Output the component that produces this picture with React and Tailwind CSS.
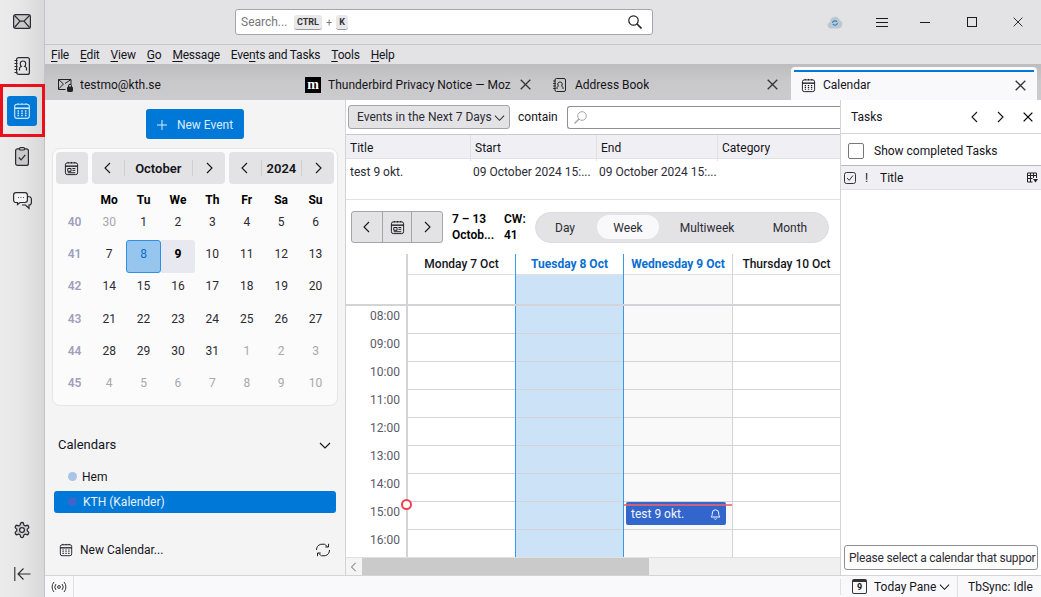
import React from "react";

const ink = "#15141a";

function CalIcon({ className = "w-4 h-4", small }) {
  return (
    <svg className={className} viewBox="0 0 16 16" fill="none" stroke="currentColor" strokeWidth="1">
      <rect x="1.5" y="2" width="13" height="12.5" rx="2" />
      <path d="M1.5 5.5h13" strokeWidth="1.4" />
      <path d="M4.5 1v1.5M8 1v1.5M11.5 1v1.5" />
      {small ? (
        <path d="M4 8h3.5v3H4zM9 8h3M9 10h3M4 12.5h8" strokeWidth="1" />
      ) : (
        <path d="M4 8h1.4M7.3 8h1.4M10.6 8H12M4 10h1.4M7.3 10h1.4M10.6 10H12M4 12h1.4M7.3 12h1.4M10.6 12H12" strokeWidth="1.2" />
      )}
    </svg>
  );
}

function Chevron({ dir = "left", className = "w-3 h-3" }) {
  const d = { left: "M8 1 3 6l5 5", right: "M4 1l5 5-5 5", down: "M1 4l5 5 5-5" }[dir];
  return (
    <svg className={className} viewBox="0 0 12 12" fill="none" stroke="currentColor" strokeWidth="1.1">
      <path d={d} />
    </svg>
  );
}

function CloseX({ className = "w-[11px] h-[11px]", w = "1.3" }) {
  return (
    <svg className={className} viewBox="0 0 11 11" fill="none" stroke="currentColor" strokeWidth={w}>
      <path d="M.7.7l9.6 9.6M10.3.7.7 10.3" />
    </svg>
  );
}

function RailButton({ children, active }) {
  return (
    <button className={active ? "w-[30px] h-[30px] rounded-[3px] bg-[#0078d7] text-[#cfe6fb] flex items-center justify-center" : "w-[30px] h-[30px] flex items-center justify-center text-[#2b2a30]"}>
      {children}
    </button>
  );
}

function Rail() {
  return (
    <aside className="w-[45px] shrink-0 flex flex-col items-center gap-[15px] pt-[6px] pb-[8px] bg-linear-to-r from-[#ececec] via-[#e6e6e6] to-[#d8d8d8] border-r border-[#c4c4c6]">
      <RailButton>
        <svg className="w-[18px] h-[15px]" viewBox="0 0 18 15" fill="#c9c9cb" stroke="currentColor" strokeWidth="1.2">
          <rect x=".6" y=".6" width="16.8" height="13.8" rx="2" />
          <path d="M1.5 1.5 7 7.2h4l5.5-5.7M1.5 13.5 7 7.2M16.5 13.5 11 7.2" fill="none" />
        </svg>
      </RailButton>
      <RailButton>
        <svg className="w-[16px] h-[18px]" viewBox="0 0 16 18" fill="none" stroke="currentColor" strokeWidth="1.2">
          <rect x="2.6" y=".6" width="12.8" height="16.8" rx="2" />
          <path d="M.5 3.5h3M.5 6.5h3M.5 9.5h3M.5 12.5h3M.5 15.5h3" strokeWidth="1" />
          <path d="M5.5 13.5v-2.3c0-1 1-1.4 1.8-1.7C6.5 8.8 6.3 7.6 6.3 6.5c0-1.4 1-2.5 2.7-2.5s2.7 1.1 2.7 2.5c0 1.1-.2 2.3-1 3 .8.3 1.8.7 1.8 1.7v2.3" />
        </svg>
      </RailButton>
      <RailButton active>
        <CalIcon className="w-[18px] h-[18px]" />
      </RailButton>
      <RailButton>
        <svg className="w-[14px] h-[19px]" viewBox="0 0 14 19" fill="#c9c9cb" stroke="currentColor" strokeWidth="1.2">
          <rect x=".6" y="1.8" width="12.8" height="16.6" rx="2" />
          <rect x="4.5" y=".6" width="5" height="2.4" rx="1" fill="#e6e6e6" />
          <path d="M3.8 10.5l2.3 2.4 4.2-5" fill="none" />
        </svg>
      </RailButton>
      <RailButton>
        <svg className="w-[19px] h-[18px]" viewBox="0 0 19 18" fill="none" stroke="currentColor" strokeWidth="1.2">
          <path d="M3 .7h9c1.4 0 2.4 1 2.4 2.4v5c0 1.4-1 2.4-2.4 2.4H7l-2.5 2v-2H3C1.6 10.5.6 9.5.6 8.1v-5C.6 1.7 1.6.7 3 .7z" fill="#f4f4f4" />
          <path d="M14.5 4.5c2.3 0 3.9.9 3.9 2.8v3.2c0 1.5-1 2.5-2.4 2.5v3.3l-3.5-3.3H9" />
          <path d="M5 5.5h.8M7.5 5.5h.8M10 5.5h.8" />
        </svg>
      </RailButton>
      <div className="mt-auto flex flex-col items-center gap-[14px]">
        <RailButton>
          <svg className="w-[18px] h-[18px]" viewBox="0 0 24 24" fill="#cfcfd1" stroke="currentColor" strokeWidth="1.7">
            <path d="M12.22 2h-.44a2 2 0 0 0-2 2v.18a2 2 0 0 1-1 1.73l-.43.25a2 2 0 0 1-2 0l-.15-.08a2 2 0 0 0-2.73.73l-.22.38a2 2 0 0 0 .73 2.73l.15.1a2 2 0 0 1 1 1.72v.51a2 2 0 0 1-1 1.74l-.15.09a2 2 0 0 0-.73 2.73l.22.38a2 2 0 0 0 2.73.73l.15-.08a2 2 0 0 1 2 0l.43.25a2 2 0 0 1 1 1.73V20a2 2 0 0 0 2 2h.44a2 2 0 0 0 2-2v-.18a2 2 0 0 1 1-1.73l.43-.25a2 2 0 0 1 2 0l.15.08a2 2 0 0 0 2.73-.73l.22-.39a2 2 0 0 0-.73-2.73l-.15-.08a2 2 0 0 1-1-1.74v-.5a2 2 0 0 1 1-1.74l.15-.09a2 2 0 0 0 .73-2.73l-.22-.38a2 2 0 0 0-2.73-.73l-.15.08a2 2 0 0 1-2 0l-.43-.25a2 2 0 0 1-1-1.73V4a2 2 0 0 0-2-2z" />
            <circle cx="12" cy="12" r="3.2" fill="#ececec" />
          </svg>
        </RailButton>
        <RailButton>
          <svg className="w-[17px] h-[14px]" viewBox="0 0 17 14" fill="none" stroke="currentColor" strokeWidth="1.1">
            <path d="M.8 0v14M16.5 7H4M9.5 1.5 4 7l5.5 5.5" />
          </svg>
        </RailButton>
      </div>
    </aside>
  );
}

function TitleBar() {
  return (
    <div className="h-[45px] shrink-0 flex items-center bg-[#e3e3e6] border-b border-[#c6c6c8] pl-[190px]">
      <div className="w-[418px] h-[26px] bg-white border border-[#a5a5a9] rounded-[3px] flex items-center pl-[5px] pr-[10px] text-[12px]">
        <span className="w-[53px] text-[#77777c]">Search...</span>
        <span className="w-[28px] h-[15px] rounded-[3px] bg-[#e8e8ea] border-b border-[#9a9a9e] text-[9px] leading-[14px] text-center font-bold text-[#333]">CTRL</span>
        <span className="w-[14px] text-center text-[#77777c] text-[10px]">+</span>
        <span className="w-[12px] h-[15px] rounded-[3px] bg-[#e8e8ea] border-b border-[#9a9a9e] text-[9px] leading-[14px] text-center font-bold text-[#333]">K</span>
        <svg className="ml-auto w-[14px] h-[14px]" viewBox="0 0 14 14" fill="none" stroke="#222" strokeWidth="1.2">
          <circle cx="5.5" cy="5.5" r="4.7" />
          <path d="M9 9l4.5 4.5" strokeWidth="1.6" />
        </svg>
      </div>
      <svg className="ml-[174px] w-[16px] h-[13px]" viewBox="0 0 16 13">
        <path d="M4 12.5c-2 0-3.5-1.4-3.5-3.2 0-1.5 1-2.7 2.4-3C3.2 3 5.3.8 8 .8c2.3 0 4.2 1.5 4.8 3.6 1.6.3 2.7 1.7 2.7 3.4 0 2.6-1.8 4.7-3.8 4.7z" fill="#bcc8d0" />
        <path d="M5.5 7a2.600 2.600 0 0 1 4.700-1M10.500 7a2.600 2.600 0 0 1-4.700 1" fill="none" stroke="#2f86c9" strokeWidth="1.2" />
      </svg>
      <svg className="ml-[33px] w-[12px] h-[9px]" viewBox="0 0 12 9" stroke="#1b1b1f" strokeWidth="1">
        <path d="M0 .5h12M0 4.5h12M0 8.5h12" />
      </svg>
      <div className="ml-[32px] w-[10px] h-[1px] bg-[#1b1b1f]" />
      <div className="ml-[37px] w-[10px] h-[10px] border border-[#1b1b1f]" />
      <CloseX className="ml-[36px] w-[10px] h-[10px] text-[#1b1b1f]" w="1" />
    </div>
  );
}

const menus = [
  ["", "F", "ile"],
  ["", "E", "dit"],
  ["", "V", "iew"],
  ["", "G", "o"],
  ["", "M", "essage"],
  ["Eve", "n", "ts and Tasks"],
  ["", "T", "ools"],
  ["", "H", "elp"],
];

function MenuBar() {
  return (
    <div className="h-[19px] shrink-0 flex items-center gap-[11px] pl-[6px] bg-[#e3e3e6] text-[12px] tracking-[-0.2px]" style={{ color: ink }}>
      {menus.map(([a, b, c]) => (
        <span key={b + c} className="whitespace-nowrap">
          {a}
          <span className="underline underline-offset-2">{b}</span>
          {c}
        </span>
      ))}
    </div>
  );
}

function Tab({ icon, label, width, close, closeRight, fade }) {
  return (
    <div className={`${width} h-full pt-[5px] flex items-center text-[12px] relative`}>
      {icon}
      <span className="ml-[7px] whitespace-nowrap overflow-hidden">{label}</span>
      {fade && <span className="absolute right-[27px] w-[20px] h-[15px] bg-linear-to-r from-transparent to-[#cacacc]" />}
      {close && <CloseX className={`absolute ${closeRight} w-[11px] h-[11px] text-[#333] shrink-0`} />}
    </div>
  );
}

function TabBar() {
  return (
    <div className="h-[36px] shrink-0 flex bg-linear-to-b from-[#bdbdbf] via-[#c9c9cb] to-[#cbcbcd] pl-[13px]" style={{ color: ink }}>
      <Tab
        width="w-[247px]"
        label="testmo@kth.se"
        icon={
          <svg className="w-[15px] h-[14px] shrink-0" viewBox="0 0 15 14" fill="none" stroke="#222" strokeWidth="1">
            <path d="M.5 1.5H13v5M.5 1.5v10h7M.5 1.5l5 4.500-5 5M13 1.500 7 5.500" />
            <rect x="9.5" y="9" width="5" height="4.5" rx=".8" fill="#222" />
            <path d="M10.5 9V7.800a1.500 1.500 0 0 1 3 0V9" />
          </svg>
        }
      />
      <Tab
        width="w-[248px]"
        label="Thunderbird Privacy Notice — Moz"
        close
        closeRight="right-[22px]"
        fade
        icon={
          <span className="w-[16px] h-[16px] shrink-0 bg-black text-white text-[14px] leading-[14px] font-bold flex items-center justify-center" style={{ fontFamily: "'Liberation Serif', serif" }}>m</span>
        }
      />
      <Tab
        width="w-[238px]"
        label="Address Book"
        close
        closeRight="right-[13px]"
        icon={
          <svg className="w-[13px] h-[14px] mr-[2px] shrink-0" viewBox="0 0 13 14" fill="none" stroke="#222" strokeWidth="1">
            <rect x="2" y=".5" width="10.5" height="13" rx="1.5" />
            <path d="M.2 3h2.500M.2 5.500h2.500M.2 8h2.500M.2 10.500h2.500" />
            <path d="M4 11V9.500c0-.8 1-1 1.500-1.300C5 7.700 4.800 6.800 4.800 6c0-1.200.8-2 2.200-2s2.200.8 2.200 2c0 .8-.2 1.700-.7 2.200.5.300 1.500.5 1.500 1.300V11" />
          </svg>
        }
      />
      <div className="w-[246px] h-[33px] self-end rounded-t-[4px] bg-[#f9f9fb] flex items-center pt-[3px] pl-[10px] pr-[11px] relative text-[12px]">
        <div className="absolute left-[3px] right-[3px] top-[3px] h-[2px] bg-[#0078d7]" />
        <CalIcon className="w-[15px] h-[15px]" />
        <span className="ml-[7px]">Calendar</span>
        <CloseX className="ml-auto w-[11px] h-[11px] text-[#333]" />
      </div>
    </div>
  );
}

function MonthNav({ label, width }) {
  return (
    <div className={`${width} h-[32px] rounded-[4px] bg-[#e3e3e6] flex items-center text-[13px] font-semibold`}>
      <span className="w-[32px] flex justify-center"><Chevron dir="left" /></span>
      <span className="flex-1 h-[16px] border-x border-[#cfcfd3] flex items-center justify-center leading-none">{label}</span>
      <span className="w-[32px] flex justify-center"><Chevron dir="right" /></span>
    </div>
  );
}

const weeks = [
  [40, [30, 1, 2, 3, 4, 5, 6]],
  [41, [7, 8, 9, 10, 11, 12, 13]],
  [42, [14, 15, 16, 17, 18, 19, 20]],
  [43, [21, 22, 23, 24, 25, 26, 27]],
  [44, [28, 29, 30, 31, 1, 2, 3]],
  [45, [4, 5, 6, 7, 8, 9, 10]],
];

function MiniMonth() {
  return (
    <div className="mx-[7px] mt-[9px] h-[258px] rounded-[8px] border border-[#e6e6e9] bg-[#fbfbfb] p-[3px]" style={{ color: ink }}>
      <div className="flex gap-[4px]">
        <div className="w-[32px] h-[32px] rounded-[4px] bg-[#e3e3e6] flex items-center justify-center">
          <CalIcon className="w-[15px] h-[15px]" small />
        </div>
        <MonthNav label="October" width="w-[134px]" />
        <MonthNav label="2024" width="w-[106px]" />
      </div>
      <div className="grid grid-cols-[35px_repeat(7,34.4px)] text-[12px] text-center mt-[9px] pl-[1px]">
        <span />
        {["Mo", "Tu", "We", "Th", "Fr", "Sa", "Su"].map((d) => (
          <span key={d} className="h-[13px] flex items-center justify-center font-bold text-black">{d}</span>
        ))}
        {weeks.map(([w, days], wi) => (
          <React.Fragment key={w}>
            <span className="h-[32.2px] flex items-center justify-center font-semibold text-[#a09fbd]">{w}</span>
            {days.map((d, i) => {
              const outside = (wi === 0 && d === 30) || wi === 5 || (wi === 4 && i > 3);
              let cls = "h-[32.2px] flex items-center justify-center text-[#2b2a33]";
              if (outside) cls = "h-[32.2px] flex items-center justify-center text-[#a8a8ae]";
              if (wi === 1 && d === 8) cls = "h-[33px] mt-[2px] -mb-[3px] flex items-center justify-center rounded-[3px] bg-[#96c6ee] border border-[#2e8fe6] text-[#0a6fd0] pb-[5px]";
              if (wi === 1 && d === 9) cls = "h-[33px] mt-[2px] -mb-[3px] flex items-center justify-center rounded-r-[3px] bg-[#e8e8f1] font-extrabold text-black pb-[5px]";
              return <span key={i} className={cls}>{d}</span>;
            })}
          </React.Fragment>
        ))}
      </div>
    </div>
  );
}

function LeftPane() {
  return (
    <div className="w-[301px] shrink-0 bg-[#f4f4f5] border-r border-[#d4d4d8] flex flex-col" style={{ color: ink }}>
      <button className="self-center mt-[9px] w-[98px] h-[30px] pt-[1px] rounded-[3px] bg-[#0078d7] text-[#dcecfa] text-[12px] flex items-center justify-center gap-[10px]">
        <svg className="w-[10px] h-[10px]" viewBox="0 0 10 10" stroke="currentColor" strokeWidth="1"><path d="M5 0v10M0 5h10" /></svg>
        New Event
      </button>
      <MiniMonth />
      <div className="mt-[29px] pl-[13px] pr-[14px] flex items-center justify-between text-[13px]">
        <span>Calendars</span>
        <Chevron dir="down" className="w-[12px] h-[12px]" />
      </div>
      <div className="mt-[11px] pl-[23px] h-[22px] flex items-center text-[12px]">
        <span className="w-[9px] h-[9px] rounded-full bg-[#a8c4e6]" />
        <span className="ml-[5px]">Hem</span>
      </div>
      <div className="mx-[9px] mt-[3px] pl-[14px] h-[22px] rounded-[3px] bg-[#0078d7] flex items-center text-[12px] text-[#e8f2fb]">
        <span className="w-[9px] h-[9px] rounded-full bg-[#3d66cc]" />
        <span className="ml-[6px]">KTH (Kalender)</span>
      </div>
      <div className="mt-auto mb-[16px] pl-[14px] pr-[14px] flex items-center text-[12px]">
        <CalIcon className="w-[14px] h-[14px]" />
        <span className="ml-[7px]">New Calendar...</span>
        <svg className="ml-auto w-[16px] h-[14px]" viewBox="0 0 16 14" fill="none" stroke="#222" strokeWidth="1">
          <path d="M1.5 7a6 6 0 0 1 11-3.300M14.500 7a6 6 0 0 1-11 3.300M13.500.8V4h-3.200M2.500 13.200V10h3.200" />
        </svg>
      </div>
    </div>
  );
}

function FilterBar() {
  return (
    <div className="h-[34px] shrink-0 bg-white flex items-center pl-[2px] text-[12px]">
      <div className="w-[162px] h-[24px] bg-[#e3e3e6] border border-[#a5a5a9] rounded-[3px] flex items-center pl-[8px] pr-[4px] text-[#2c2b33]">
        <span className="whitespace-nowrap">Events in the Next 7 Days</span>
        <Chevron dir="down" className="ml-auto w-[11px] h-[11px]" />
      </div>
      <span className="ml-[8px] w-[40px]">contain</span>
      <div className="ml-[9px] flex-1 h-[23px] bg-white border border-[#8f8f94] border-r-0 rounded-l-[3px] flex items-center pl-[6px]">
        <svg className="w-[13px] h-[13px]" viewBox="0 0 13 13" fill="none" stroke="#a5a5a9" strokeWidth="1">
          <circle cx="8" cy="5" r="4.3" />
          <path d="M5 8l-4.5 4.5" strokeWidth="1.4" />
        </svg>
      </div>
    </div>
  );
}

function EventList() {
  return (
    <div className="shrink-0 border-t border-[#c9c9cd]">
      <div className="h-[24px] grid grid-cols-[124px_126px_121px_1fr] bg-[#f0f0f4] border-b border-[#e0e0e6] text-[12px] leading-[26px]">
        {["Title", "Start", "End", "Category"].map((h, i) => (
          <span key={h} className={i === 0 ? "pl-[4px]" : "pl-[4px] border-l border-[#e0e0e6]"}>{h}</span>
        ))}
      </div>
      <div className="h-[41px] bg-white border-b border-[#e0e0e6] text-[12px] grid grid-cols-[124px_126px_121px_1fr] pt-[4px] text-[#2c2b33]">
        <span className="pl-[4px]">test 9 okt.</span>
        <span className="pl-[3px] whitespace-nowrap">09 October 2024 15:...</span>
        <span className="pl-[3px] whitespace-nowrap">09 October 2024 15:...</span>
        <span />
      </div>
    </div>
  );
}

function ViewToolbar() {
  return (
    <div className="h-[54px] shrink-0 bg-white flex items-center pl-[5px] text-[12px]">
      <div className="w-[92px] h-[32px] grid grid-cols-3 bg-[#e3e3e6] border border-[#a5a5a9] rounded-[3px]">
        <span className="flex items-center justify-center"><Chevron dir="left" /></span>
        <span className="flex items-center justify-center border-x border-[#a5a5a9]"><CalIcon className="w-[15px] h-[15px]" small /></span>
        <span className="flex items-center justify-center"><Chevron dir="right" /></span>
      </div>
      <div className="ml-[9px] w-[52px] font-semibold leading-[16px] text-black">
        <div>7 – 13</div>
        <div>Octob...</div>
      </div>
      <div className="w-[31px] font-semibold leading-[16px] text-black">
        <div>CW:</div>
        <div>41</div>
      </div>
      <div className="w-[294px] h-[31px] rounded-full bg-[#e3e3e6] border border-[#dcdcdf] flex items-center pl-[3px] text-[#2c2b33]">
        <span className="w-[52px] text-center pt-[1px]">Day</span>
        <span className="ml-[6px] w-[62px] h-[24px] pt-[1px] rounded-full bg-[#f9f9fb] flex items-center justify-center">Week</span>
        <span className="ml-[8px] w-[80px] text-center pt-[1px]">Multiweek</span>
        <span className="ml-[5px] w-[76px] text-center pt-[1px]">Month</span>
      </div>
    </div>
  );
}

const hours = ["08:00", "09:00", "10:00", "11:00", "12:00", "13:00", "14:00", "15:00", "16:00"];

function Column({ bg, children }) {
  return (
    <div className={`${bg} relative flex flex-col`}>
      {hours.map((h) => (
        <div key={h} className="h-[28px] shrink-0 border-b border-[#d4d4d8]" />
      ))}
      {children}
    </div>
  );
}

function WeekView() {
  return (
    <div className="flex-1 min-h-0 bg-white flex flex-col text-[12px] relative">
      <div className="h-[21px] shrink-0 grid grid-cols-[60px_2px_107px_1px_107px_1px_108px_1px_1fr] font-medium">
        <span />
        <span className="bg-[#d4d4d8]" />
        <span className="flex items-center justify-center border-b border-[#e0e0e4]">Monday 7 Oct</span>
        <span className="bg-[#3b97ea]" />
        <span className="flex items-center justify-center border-b border-[#e0e0e4] font-bold text-[#0a6fd0]">Tuesday 8 Oct</span>
        <span className="bg-[#3b97ea]" />
        <span className="flex items-center justify-center border-b border-[#e0e0e4] font-bold text-[#0a6fd0] whitespace-nowrap">Wednesday 9 Oct</span>
        <span className="bg-[#d4d4d8]" />
        <span className="flex items-center justify-center border-b border-[#e0e0e4] whitespace-nowrap">Thursday 10 Oct</span>
      </div>
      <div className="h-[31px] shrink-0 grid grid-cols-[60px_2px_107px_1px_107px_1px_108px_1px_1fr] border-b-2 border-[#d4d4d8]">
        <span />
        <span className="bg-[#d4d4d8]" />
        <span />
        <span className="bg-[#3b97ea]" />
        <span className="bg-[#cbe2f7]" />
        <span className="bg-[#3b97ea]" />
        <span className="bg-[#f9f9f9]" />
        <span className="bg-[#d4d4d8]" />
        <span />
      </div>
      <div className="flex-1 min-h-0 overflow-hidden grid grid-cols-[60px_2px_107px_1px_107px_1px_108px_1px_1fr] relative">
        <div className="flex flex-col text-[#5b5b66]">
          {hours.map((h) => (
            <div key={h} className="h-[28px] shrink-0 pr-[6px] text-right leading-[18px] pt-[1px]">{h}</div>
          ))}
        </div>
        <span className="bg-[#d4d4d8]" />
        <Column bg="bg-white" />
        <span className="bg-[#3b97ea]" />
        <Column bg="bg-[#cbe2f7]" />
        <span className="bg-[#3b97ea]" />
        <Column bg="bg-[#f9f9f9]">
          <div className="absolute left-[2px] right-[6px] top-[196px] h-[23px] pt-[1px] rounded-[2px] bg-[#3366cc] text-[#f2f5fb] flex items-center pl-[5px] pr-[5px]">
            <span>test 9 okt.</span>
            <svg className="ml-auto w-[11px] h-[12px]" viewBox="0 0 11 12" fill="none" stroke="currentColor" strokeWidth="1">
              <path d="M1 9c1-1 1.300-2 1.300-4a3.200 3.200 0 0 1 6.400 0c0 2 .3 3 1.300 4zM4.300 10.500a1.300 1.300 0 0 0 2.400 0" />
            </svg>
          </div>
          <div className="absolute left-0 right-0 top-[198px] h-[2px] bg-[#f0606c] opacity-80" />
        </Column>
        <span className="bg-[#d4d4d8]" />
        <Column bg="bg-white" />
        <div className="absolute left-[55px] top-[193px] w-[11px] h-[11px] rounded-full bg-white border-2 border-[#f0404c]" />
      </div>
      <div className="h-[18px] shrink-0 flex bg-[#f0f0f0] border-t border-[#e0e0e0]">
        <span className="w-[16px] bg-[#f4f4f4] flex items-center justify-center text-[#555]"><Chevron dir="left" className="w-[10px] h-[10px]" /></span>
        <span className="w-[287px] bg-[#cacaca]" />
      </div>
    </div>
  );
}

function CenterPane() {
  return (
    <div className="w-[494px] shrink-0 flex flex-col min-h-0 bg-white" style={{ color: ink }}>
      <FilterBar />
      <EventList />
      <ViewToolbar />
      <WeekView />
    </div>
  );
}

function TasksPane() {
  return (
    <div className="flex-1 min-w-0 flex flex-col bg-white border-l border-[#d4d4d8] text-[12px]" style={{ color: ink }}>
      <div className="h-[34px] shrink-0 flex items-center pl-[10px] pr-[8px] pt-[1px] border-b border-[#d4d4d8]">
        <span>Tasks</span>
        <Chevron dir="left" className="ml-auto w-[12px] h-[12px]" />
        <Chevron dir="right" className="ml-[13px] w-[12px] h-[12px]" />
        <CloseX className="ml-[17px] w-[10px] h-[10px] text-black" w="1.4" />
      </div>
      <div className="h-[32px] shrink-0 flex items-center pl-[7px] pt-[2px] border-b border-[#b9b9bd]">
        <span className="w-[16px] h-[16px] rounded-[2px] border-[1.5px] border-[#77777c]" />
        <span className="ml-[10px]">Show completed Tasks</span>
      </div>
      <div className="h-[24px] shrink-0 flex items-center pl-[3px] pr-[3px] bg-[#f0f0f4] border-b border-[#e0e0e6]">
        <svg className="w-[12px] h-[12px]" viewBox="0 0 12 12" fill="none" stroke="#333" strokeWidth="1">
          <rect x=".5" y=".5" width="11" height="11" rx="2" />
          <path d="M3 6l2.200 2.300L9 3.500" />
        </svg>
        <span className="ml-[9px] w-[14px]">!</span>
        <span className="ml-[1px]">Title</span>
        <svg className="ml-auto w-[11px] h-[11px]" viewBox="0 0 11 11" fill="none" stroke="#222" strokeWidth="1">
          <path d="M.5 1h9v5M.5 1v9h5M.5 3.500h9M3.500 1v9M6.500 1v5M.5 6.500h5" />
          <path d="M6 7h5L8.500 10.500z" fill="#222" stroke="none" />
        </svg>
      </div>
      <div className="flex-1" />
      <div className="mx-[3px] mb-[5px] h-[25px] border border-[#8f8f94] rounded-[3px] pl-[4px] flex items-center overflow-hidden whitespace-nowrap tracking-[-0.2px] text-[#2c2b33]">
        Please select a calendar that suppor
      </div>
    </div>
  );
}

function StatusBar() {
  return (
    <div className="h-[22px] shrink-0 flex items-center bg-[#f9f9fb] border-t border-[#d4d4d8] text-[12px]" style={{ color: ink }}>
      <span className="w-[29px] h-full flex items-center justify-center border-r border-[#e0e0e4]">
        <svg className="w-[16px] h-[12px]" viewBox="0 0 16 12" fill="none" stroke="#333" strokeWidth="1">
          <circle cx="8" cy="6" r="1.4" />
          <path d="M5 3a4.500 4.500 0 0 0 0 6M11 3a4.500 4.500 0 0 1 0 6M3 1a7.500 7.500 0 0 0 0 10M13 1a7.500 7.500 0 0 1 0 10" />
        </svg>
      </span>
      <span className="ml-auto w-[1px] h-[16px] bg-[#e0e0e4]" />
      <span className="ml-[11px] relative w-[15px] h-[15px] flex items-center justify-center">
        <span className="absolute inset-0 rounded-[2px] border border-[#333] border-t-[3px]" />
        <span className="relative text-[9px] font-bold leading-none pt-[2px]">9</span>
      </span>
      <span className="ml-[7px] w-[60px] whitespace-nowrap">Today Pane</span>
      <Chevron dir="down" className="ml-[5px] w-[11px] h-[11px]" />
      <span className="ml-[7px] w-[1px] h-[21px] bg-[#e0e0e4]" />
      <span className="ml-[10px] w-[73px] whitespace-nowrap">TbSync: Idle</span>
    </div>
  );
}

export default function App() {
  return (
    <div className="w-[1041px] h-[597px] overflow-hidden flex relative bg-white" style={{ fontFamily: "Roboto, sans-serif", color: ink }}>
      <Rail />
      <div className="flex-1 min-w-0 flex flex-col">
        <TitleBar />
        <MenuBar />
        <TabBar />
        <div className="flex-1 min-h-0 flex">
          <LeftPane />
          <CenterPane />
          <TasksPane />
        </div>
        <StatusBar />
      </div>
      <div className="absolute left-0 top-[84px] w-[45px] h-[53px] border-[3px] border-[#e8101a] pointer-events-none" />
    </div>
  );
}
